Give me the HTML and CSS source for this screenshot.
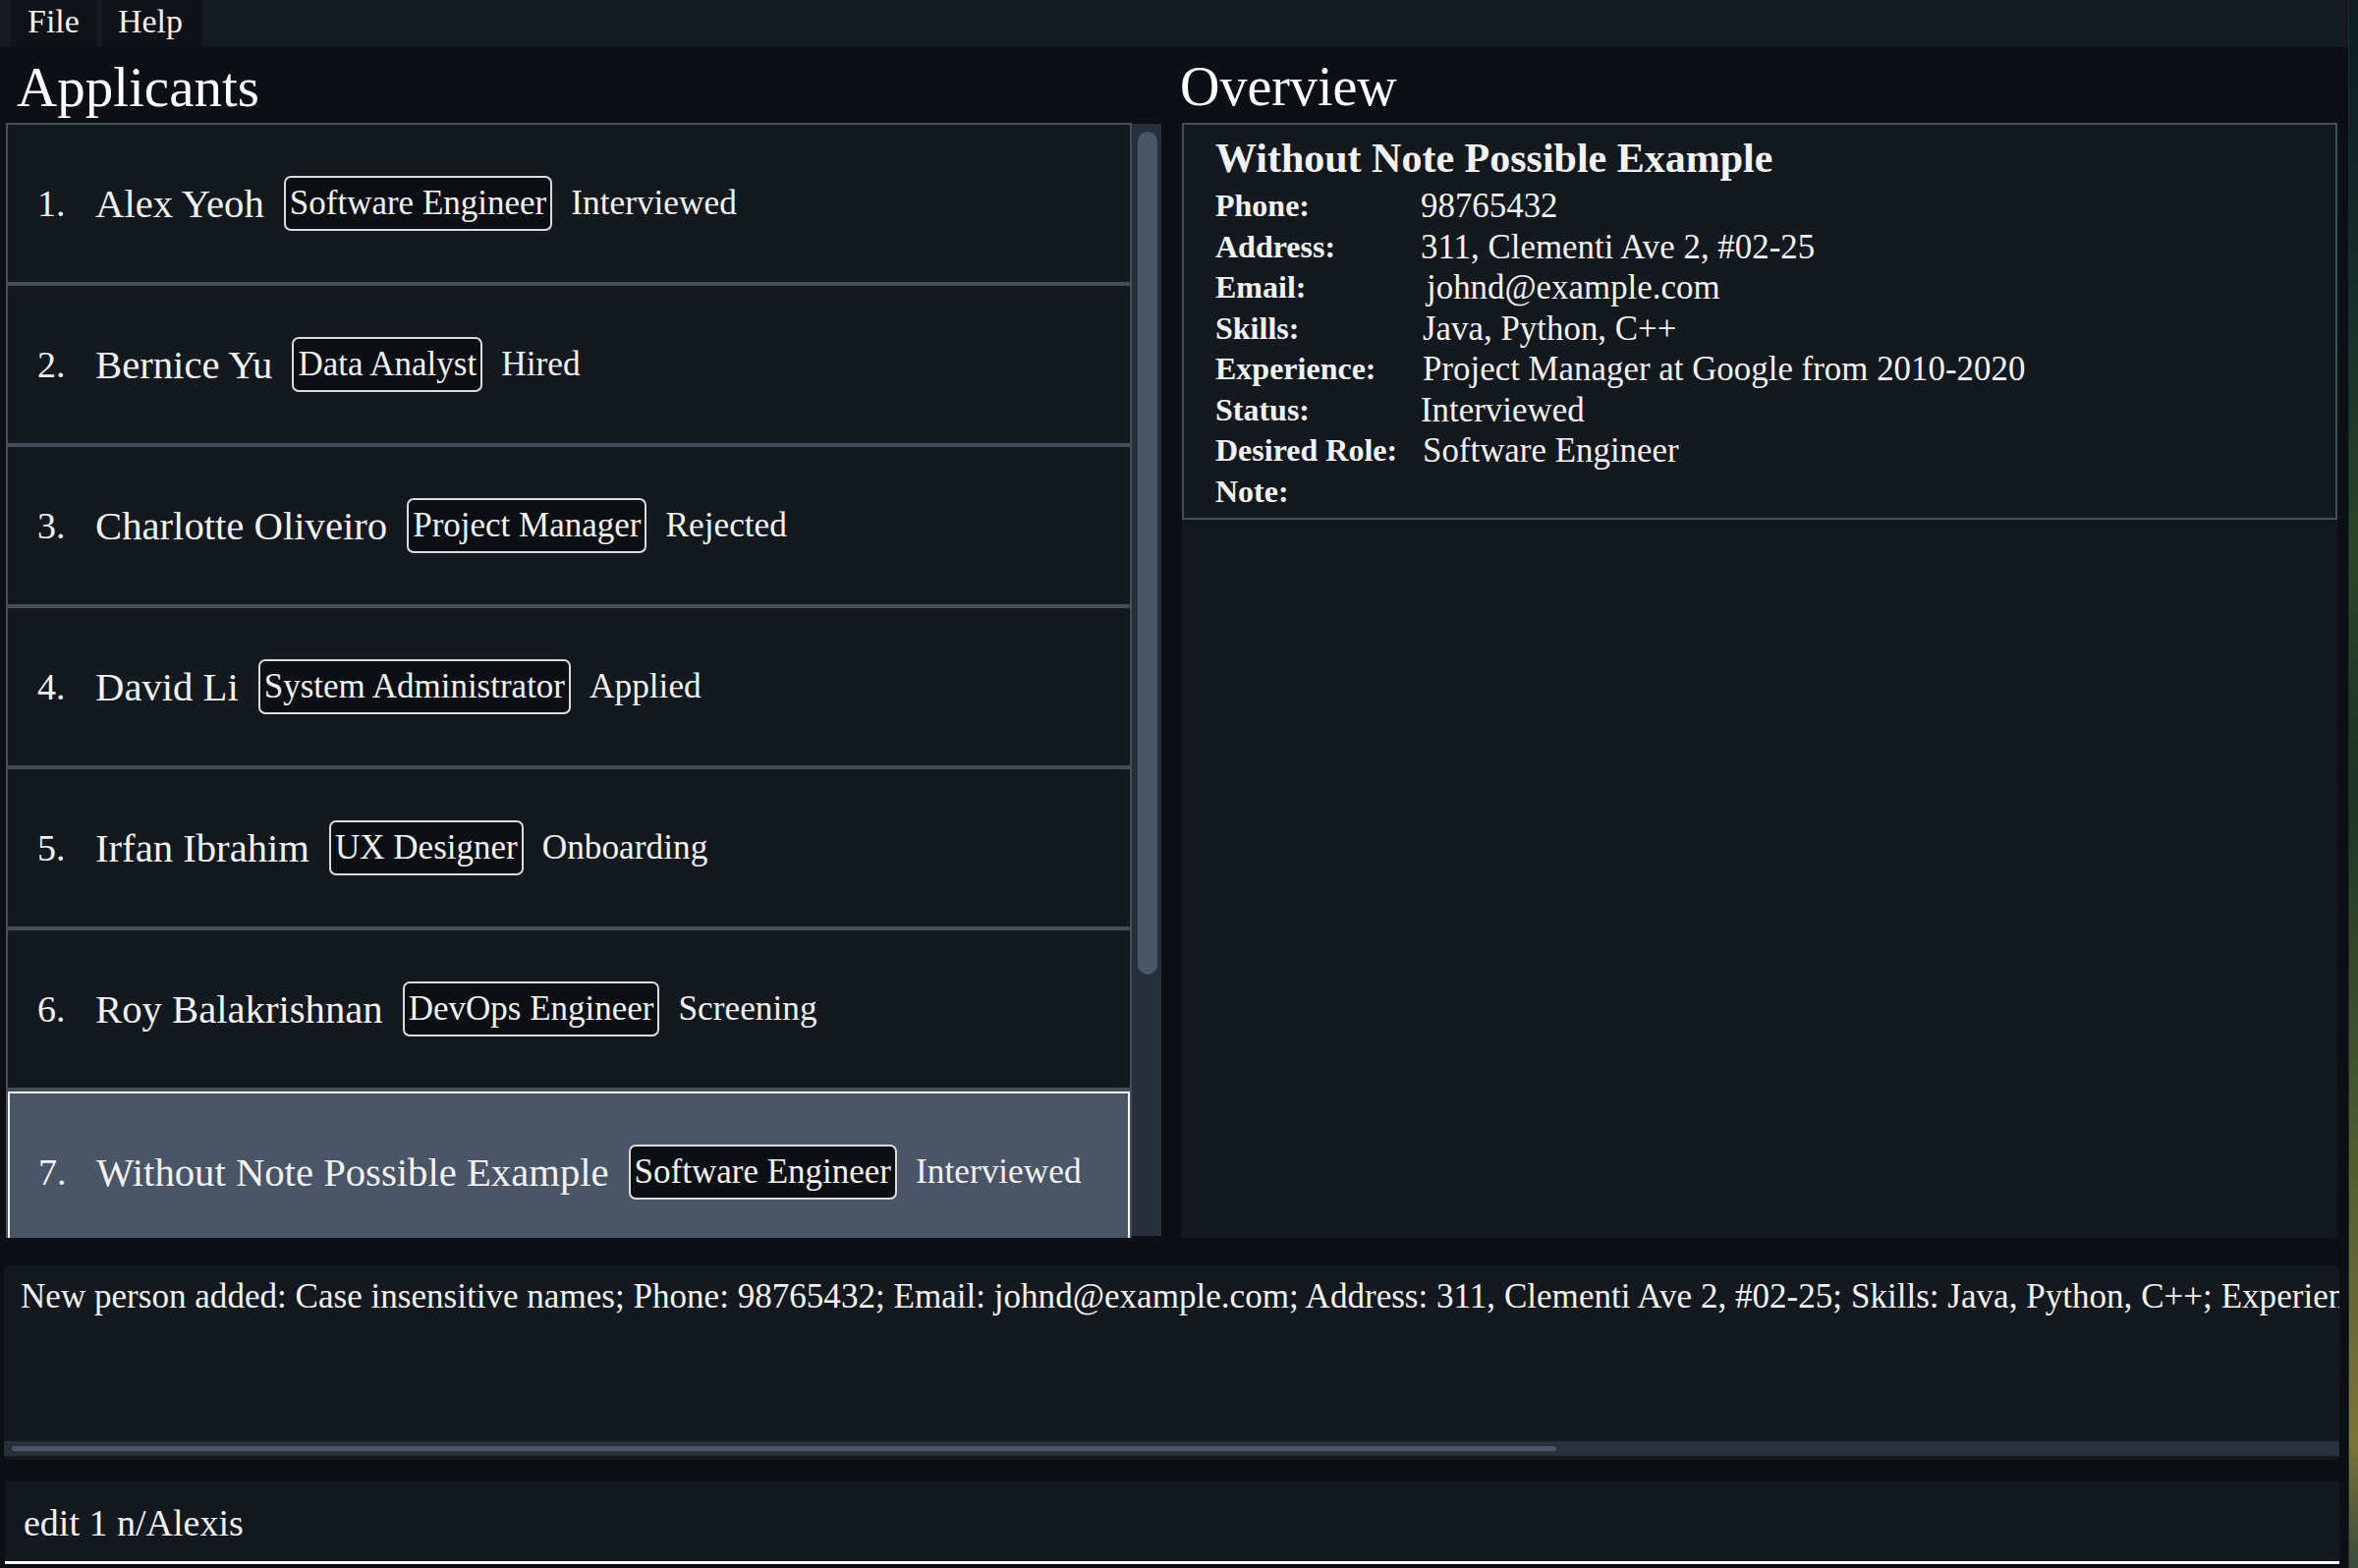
FILE: index.html
```html
<!DOCTYPE html>
<html lang="en">
<head>
<meta charset="utf-8">
<title>Applicants</title>
<link rel="stylesheet" href="styles.css">
</head>
<body>
<div class="screen">
  <div class="app">
    <nav class="menubar">
      <div class="menu-item">File</div>
      <div class="menu-item">Help</div>
    </nav>
    <main class="main">
      <section class="left">
        <h1 class="title">Applicants</h1>
        <div class="list-area">
          <div class="list">
            <div class="item"><span class="num">1.</span><span class="name">Alex Yeoh</span><span class="tag">Software Engineer</span><span class="status">Interviewed</span></div>
            <div class="item"><span class="num">2.</span><span class="name">Bernice Yu</span><span class="tag">Data Analyst</span><span class="status">Hired</span></div>
            <div class="item"><span class="num">3.</span><span class="name">Charlotte Oliveiro</span><span class="tag">Project Manager</span><span class="status">Rejected</span></div>
            <div class="item"><span class="num">4.</span><span class="name">David Li</span><span class="tag">System Administrator</span><span class="status">Applied</span></div>
            <div class="item"><span class="num">5.</span><span class="name">Irfan Ibrahim</span><span class="tag">UX Designer</span><span class="status">Onboarding</span></div>
            <div class="item"><span class="num">6.</span><span class="name">Roy Balakrishnan</span><span class="tag">DevOps Engineer</span><span class="status">Screening</span></div>
            <div class="item selected"><span class="num">7.</span><span class="name">Without Note Possible Example</span><span class="tag">Software Engineer</span><span class="status">Interviewed</span></div>
          </div>
          <div class="vscroll"><div class="vthumb"></div></div>
        </div>
      </section>
      <section class="right">
        <h1 class="title title-right">Overview</h1>
        <div class="detail-area">
          <div class="card">
            <div class="card-name">Without Note Possible Example</div>
            <div class="fields">
              <div class="label">Phone:</div><div class="value">98765432</div>
              <div class="label">Address:</div><div class="value">311, Clementi Ave 2, #02-25</div>
              <div class="label">Email:</div><div class="value indent-2">johnd@example.com</div>
              <div class="label">Skills:</div><div class="value indent-1">Java, Python, C++</div>
              <div class="label">Experience:</div><div class="value indent-1">Project Manager at Google from 2010-2020</div>
              <div class="label">Status:</div><div class="value">Interviewed</div>
              <div class="label">Desired Role:</div><div class="value indent-1">Software Engineer</div>
              <div class="label">Note:</div><div class="value"></div>
            </div>
          </div>
        </div>
      </section>
    </main>
    <section class="result">
      <div class="result-text">New person added: Case insensitive names; Phone: 98765432; Email: johnd@example.com; Address: 311, Clementi Ave 2, #02-25; Skills: Java, Python, C++; Experience: Project Manager at Google from 2010-2020; Status: Interviewed; Desired Role: Software Engineer</div>
      <div class="hscroll"><div class="hthumb"></div></div>
    </section>
    <section class="command">
      <div class="command-text">edit 1 n/Alexis</div>
    </section>
  </div>
  <div class="desktop"></div>
</div>
</body>
</html>
```
FILE: styles.css
```css
* { box-sizing: border-box; }
html, body { margin: 0; padding: 0; }
body {
  width: 2400px;
  height: 1596px;
  overflow: hidden;
  background: #0c0f14;
  font-family: "Liberation Serif", "Times New Roman", serif;
  color: #f2f2f2;
}
.screen {
  display: flex;
  width: 2400px;
  height: 1596px;
}
.app {
  width: 2391px;
  height: 1596px;
  background: #0c0f14;
  display: flex;
  flex-direction: column;
  border-right: 1px solid #22282f;
}
.desktop {
  flex: 1;
  background: linear-gradient(180deg, #0d1d22 0%, #16302a 20%, #2a4628 35%, #1c3226 50%, #3b4f2c 65%, #5f6532 80%, #7a7438 92%, #3a4a3c 100%);
}
.menubar {
  height: 48px;
  background: #151a21;
  display: flex;
  padding-left: 11px;
  gap: 5px;
}
.menu-item {
  height: 48px;
  line-height: 44px;
  font-size: 34px;
  background: #0f1318;
  padding: 0 18px 0 17px;
}
.menu-item + .menu-item { padding: 0 20px 0 16px; }
.main {
  height: 1212px;
  display: flex;
  padding-left: 6px;
  gap: 21px;
}
.left { width: 1176px; display: flex; flex-direction: column; }
.right { width: 1178px; display: flex; flex-direction: column; }
.title {
  margin: 0;
  height: 77px;
  padding: 2px 0 0 11px;
  font-size: 57px;
  line-height: 77px;
  font-weight: normal;
  color: #ffffff;
}
.title-right { padding-left: 0; margin-left: -2px; font-size: 56px; }
.list-area {
  flex: 1;
  display: flex;
  overflow: hidden;
}
.list {
  width: 1146px;
  border: 2px solid #434d5c;
  border-bottom: none;
  background: #434d5c;
  display: flex;
  flex-direction: column;
  gap: 4px;
}
.item {
  flex: none;
  height: 160px;
  background: #141920;
  display: flex;
  align-items: center;
  padding-left: 30px;
  font-size: 38px;
  white-space: nowrap;
}
.item.selected {
  background: #4a5567;
  border: 2px solid #f4f4f4;
  padding-left: 29px;
  height: 164px;
}
.num { width: 59px; flex: none; }
.name { font-size: 40.7px; }
.tag {
  margin-left: 20px;
  height: 56px;
  line-height: 52px;
  font-size: 35px;
  border: 2px solid #dcdcdc;
  border-radius: 7px;
  padding: 0 4px;
  background: #0c0f14;
}
.status { margin-left: 19px; font-size: 35.3px; }
.vscroll {
  width: 30px;
  margin-top: 1px;
  height: 1132px;
  background: #262f3a;
  padding: 8px 4px 0 6px;
}
.vthumb {
  height: 858px;
  background: #4a5567;
  border-radius: 10px;
}
.detail-area {
  flex: 1;
  background: #141920;
  width: 1176px;
}
.card {
  border: 2px solid #434d5c;
  height: 404px;
  padding: 9px 30px 0 32px;
}
.card-name {
  font-size: 42px;
  font-weight: bold;
  line-height: 50px;
  margin-bottom: 3px;
}
.fields {
  display: grid;
  grid-template-columns: 209px 1fr;
  line-height: 41.5px;
}
.label { font-size: 32px; font-weight: bold; }
.value { font-size: 34.9px; }
.indent-1 { padding-left: 2px; }
.indent-2 { padding-left: 6px; }
.result {
  margin: 28px 9px 0 4px;
  height: 198px;
  background: #141920;
  border-radius: 6px;
  display: flex;
  flex-direction: column;
  overflow: hidden;
}
.result-text {
  flex: 1;
  font-size: 35.1px;
  white-space: nowrap;
  overflow: hidden;
  padding: 10px 0 0 17px;
  line-height: 44px;
}
.hscroll {
  height: 15px;
  margin-bottom: 4px;
  background: #27303b;
  padding: 5px 0 0 8px;
}
.hthumb {
  width: 1572px;
  height: 5px;
  background: #4a5567;
  border-radius: 3px;
}
.command {
  margin: 22px 9px 0 5px;
  height: 84px;
  background: #141920;
  border-bottom: 3px solid #ffffff;
}
.command-text {
  font-size: 38px;
  line-height: 44px;
  padding: 20px 0 0 19px;
}
```
